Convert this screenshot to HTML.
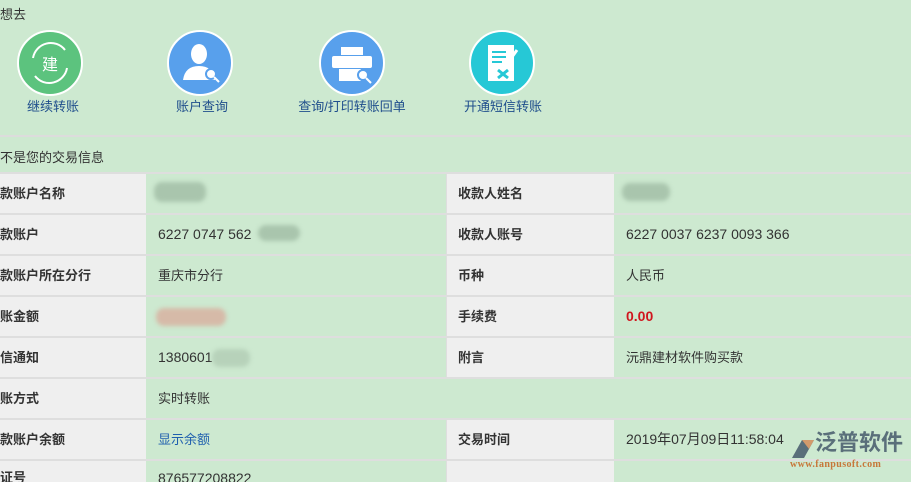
<!DOCTYPE html><html><head><meta charset="utf-8"><style>
*{margin:0;padding:0;box-sizing:border-box}
html,body{width:918px;height:482px;overflow:hidden}
body{background:#fff;font-family:"Liberation Sans","Noto Sans CJK SC",sans-serif;font-size:13px;color:#333;position:relative}
.bg{position:absolute;left:0;top:0;width:911px;height:482px;background:#cde9d0;overflow:hidden}
.t{position:absolute;white-space:nowrap}
.ic{position:absolute;width:66px;height:66px;border-radius:50%;border:2px solid #fff}
.lb{position:absolute;top:96px;color:#1f4e8c;font-size:13px;width:140px;text-align:center}
.row{position:absolute;left:0;width:911px;height:41px;border-top:2px solid #dedede}
.c{position:absolute;top:0;height:39px;line-height:39px;font-size:14px}
.g{background:#efefef;font-weight:bold;color:#333;font-size:13px}
.blur{position:absolute;border-radius:8px;filter:blur(2px)}
</style></head><body><div class="bg">
<div class="t" style="left:0;top:4px">想去</div>
<div class="ic" style="left:17px;top:30px;background:#5cc37e"><svg width="62" height="62"><path d="M14 26a18 18 0 0 1 32-8" stroke="#fff" stroke-width="2" fill="none"/><path d="M48 36a18 18 0 0 1-32 8" stroke="#fff" stroke-width="2" fill="none"/><text x="31" y="38" fill="#fff" font-size="16" text-anchor="middle" font-family="Noto Sans CJK SC">建</text></svg></div>
<div class="ic" style="left:167px;top:30px;background:#58a0ec"><svg width="62" height="62"><ellipse cx="30" cy="22" rx="8" ry="10" fill="#fff"/><path d="M14 48q2-14 16-14q14 0 16 14z" fill="#fff"/><circle cx="42" cy="42" r="5" fill="#fff" stroke="#58a0ec" stroke-width="2"/><path d="M45 45l5 5" stroke="#fff" stroke-width="2"/></svg></div>
<div class="ic" style="left:319px;top:30px;background:#58a0ec"><svg width="62" height="62"><rect x="20" y="15" width="22" height="8" fill="#fff"/><rect x="11" y="24" width="40" height="12" rx="2" fill="#fff"/><rect x="18" y="37" width="22" height="12" fill="#fff"/><circle cx="42" cy="43" r="5" fill="#fff" stroke="#58a0ec" stroke-width="2"/><path d="M45 46l5 5" stroke="#fff" stroke-width="2"/></svg></div>
<div class="ic" style="left:469px;top:30px;background:#26c8d6"><svg width="62" height="62"><rect x="17" y="13" width="26" height="36" fill="#fff"/><path d="M21 20h14M21 25h14M21 30h10" stroke="#26c8d6" stroke-width="2"/><path d="M36 32l10-14" stroke="#fff" stroke-width="3"/><path d="M27 38l10 8M37 38l-10 8" stroke="#26c8d6" stroke-width="3"/></svg></div>
<div class="lb" style="left:-17px">继续转账</div>
<div class="lb" style="left:132px">账户查询</div>
<div class="lb" style="left:282px">查询/打印转账回单</div>
<div class="lb" style="left:433px">开通短信转账</div>
<div style="position:absolute;left:0;top:135px;width:911px;height:2px;background:#dcdcdc"></div>
<div class="t" style="left:0;top:147px">不是您的交易信息</div>

<div class="row" style="top:172px"><div class="c g" style="left:0;width:146px">款账户名称</div><div class="c g" style="left:446px;width:168px;padding-left:11px;border-left:1px solid #dedede">收款人姓名</div></div>
<div class="row" style="top:213px"><div class="c g" style="left:0;width:146px">款账户</div><div class="c" style="left:158px">6227 0747 562</div><div class="c g" style="left:446px;width:168px;padding-left:11px;border-left:1px solid #dedede">收款人账号</div><div class="c" style="left:626px">6227 0037 6237 0093 366</div></div>
<div class="row" style="top:254px"><div class="c g" style="left:0;width:146px">款账户所在分行</div><div class="c" style="left:158px;font-size:13px">重庆市分行</div><div class="c g" style="left:446px;width:168px;padding-left:11px;border-left:1px solid #dedede">币种</div><div class="c" style="left:626px;font-size:13px">人民币</div></div>
<div class="row" style="top:295px"><div class="c g" style="left:0;width:146px">账金额</div><div class="c g" style="left:446px;width:168px;padding-left:11px;border-left:1px solid #dedede">手续费</div><div class="c" style="left:626px;color:#d0161e;font-weight:bold">0.00</div></div>
<div class="row" style="top:336px"><div class="c g" style="left:0;width:146px">信通知</div><div class="c" style="left:158px">1380601</div><div class="c g" style="left:446px;width:168px;padding-left:11px;border-left:1px solid #dedede">附言</div><div class="c" style="left:626px;font-size:13px">沅鼎建材软件购买款</div></div>
<div class="row" style="top:377px"><div class="c g" style="left:0;width:146px">账方式</div><div class="c" style="left:158px;font-size:13px">实时转账</div></div>
<div class="row" style="top:418px"><div class="c g" style="left:0;width:146px">款账户余额</div><div class="c" style="left:158px;color:#1f5fae;font-size:13px">显示余额</div><div class="c g" style="left:446px;width:168px;padding-left:11px;border-left:1px solid #dedede">交易时间</div><div class="c" style="left:626px">2019年07月09日11:58:04</div></div>
<div class="row" style="top:459px;height:23px"><div class="c g" style="left:0;width:146px;height:21px;line-height:34px">证号</div><div class="c" style="left:158px;line-height:34px">876577208822</div><div class="c g" style="left:446px;width:168px;height:21px;border-left:1px solid #dedede"></div></div>

<div class="blur" style="left:154px;top:182px;width:52px;height:20px;background:#a9c5ad"></div>
<div class="blur" style="left:258px;top:225px;width:42px;height:16px;background:#a9c5ad"></div>
<div class="blur" style="left:156px;top:308px;width:70px;height:18px;background:#d6baa8"></div>
<div class="blur" style="left:212px;top:349px;width:38px;height:18px;background:#b7d2ba"></div>
<div class="blur" style="left:622px;top:183px;width:48px;height:18px;background:#a9c5ad"></div>
<svg class="t" style="left:790px;top:437px" width="26" height="22"><path d="M2 21L12 3h12L14 21z" fill="#5a6f7a"/><path d="M12 3h12l-5 9z" fill="#d29a6c"/></svg>
<div class="t" style="left:815px;top:430px;font-size:22px;line-height:26px;color:#5a6f7a;font-weight:bold">泛普软件</div>
<div class="t" style="left:790px;top:459px;font-size:10px;color:#c7773a;font-family:'Liberation Serif',serif;font-weight:bold;letter-spacing:0.4px">www.fanpusoft.com</div>
</div>
</body></html>
